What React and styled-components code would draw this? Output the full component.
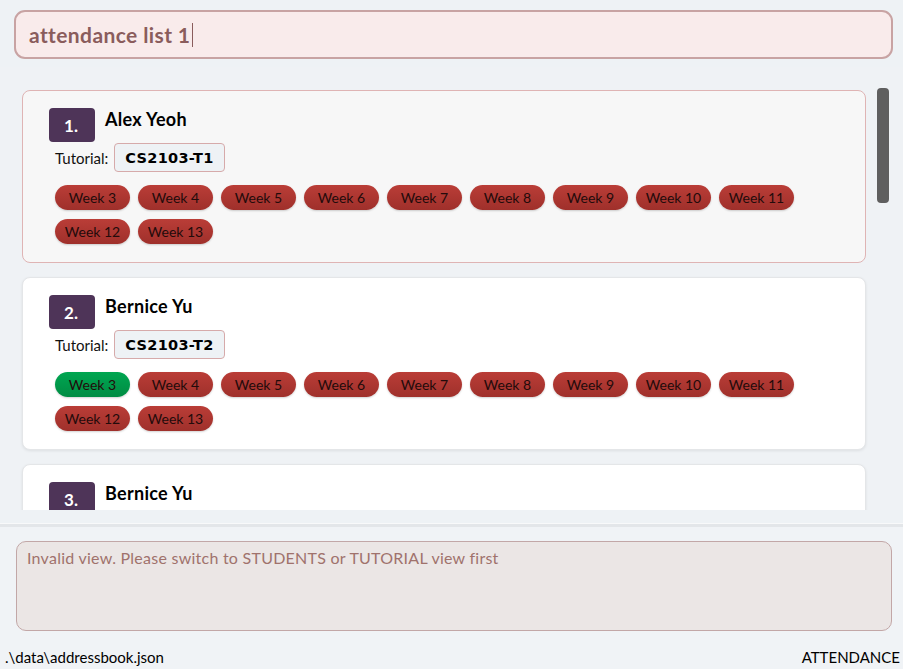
import React from 'react';
import styled, { createGlobalStyle, css } from 'styled-components';

const GlobalStyle = createGlobalStyle`
  html, body {
    margin: 0;
    padding: 0;
    background: #eef2f5;
  }
  * {
    box-sizing: border-box;
  }
`;

const Page = styled.div`
  height: 100vh;
  display: flex;
  flex-direction: column;
  background: #eef2f5;
  font-family: Lato, "Noto Sans", sans-serif;
  color: #000;
  overflow: hidden;
`;

const CommandBar = styled.div`
  padding: 10px 10px 0 14px;
`;

const CommandBox = styled.div`
  height: 49px;
  border: 2px solid #c8a3a3;
  border-radius: 11px;
  background: #f9ebeb;
  display: flex;
  align-items: center;
  padding-left: 13px;
  font-size: 21px;
  font-weight: 700;
  letter-spacing: 0.4px;
  color: #8a5c5c;
`;

const Caret = styled.span`
  display: inline-block;
  width: 0;
  height: 24px;
  border-left: 1.5px solid #8a5c5c;
  margin-left: 2px;
`;

const ListPane = styled.div`
  position: relative;
  margin-top: 8px;
  height: 443px;
  overflow: hidden;
  padding: 23px 37px 0 22px;
  display: flex;
  flex-direction: column;
  gap: 14px;
  background: #eff2f5;
`;

const ScrollThumb = styled.div`
  position: absolute;
  top: 21px;
  right: 14px;
  width: 12px;
  height: 115px;
  border-radius: 4px;
  background: #5f5f5f;
`;

const Card = styled.div`
  flex-shrink: 0;
  border-radius: 8px;
  padding: 17px 20px 18px 32px;
  ${({ $selected }) =>
    $selected
      ? css`
          background: #f7f7f7;
          border: 1px solid #dfb4b4;
        `
      : css`
          background: #ffffff;
          border: 1px solid #e4e6e8;
          box-shadow: 0 1px 3px rgba(0, 0, 0, 0.08);
        `}
`;

const CardHeader = styled.div`
  display: flex;
  align-items: flex-start;
  margin-left: -6px;
`;

const IndexBox = styled.div`
  width: 46px;
  height: 34px;
  border-radius: 4px;
  background: #4e3458;
  color: #fff;
  font-size: 17px;
  font-weight: 700;
  display: flex;
  align-items: flex-end;
  justify-content: center;
  padding-bottom: 6px;
  padding-right: 2px;
`;

const Name = styled.div`
  margin-left: 10px;
  margin-top: 1px;
  font-size: 18px;
  font-weight: 700;
  letter-spacing: 0.3px;
  line-height: 20px;
`;

const TutorialRow = styled.div`
  display: flex;
  align-items: center;
  margin-top: 1px;
`;

const TutorialLabel = styled.span`
  font-size: 15px;
  color: #111;
`;

const TutorialTag = styled.span`
  margin-left: 6px;
  height: 29px;
  padding: 0 10px;
  display: inline-flex;
  align-items: center;
  border: 1px solid #d6aaaa;
  border-radius: 4px;
  background: #eef2f5;
  font-family: "DejaVu Sans", Verdana, sans-serif;
  font-size: 14.5px;
  font-weight: 700;
  letter-spacing: 0.3px;
`;

const Weeks = styled.div`
  display: flex;
  flex-wrap: wrap;
  column-gap: 8px;
  row-gap: 9px;
  margin-top: 13px;
`;

const WeekPill = styled.span`
  width: 75px;
  height: 25px;
  border-radius: 13px;
  display: inline-flex;
  align-items: center;
  justify-content: center;
  font-size: 14px;
  color: #230b0b;
  box-shadow: 0 1px 2px rgba(0, 0, 0, 0.18);
  background: ${({ $present }) =>
    $present
      ? 'linear-gradient(#00a651, #008c43)'
      : 'linear-gradient(#ba3d37, #9f302b)'};
`;

const Divider = styled.div`
  margin-top: 13px;
  height: 4px;
  border-top: 1px solid #f8f9fa;
  background: #e3e6e9;
`;

const ResultArea = styled.div`
  padding: 14px 11px 0 16px;
  background: #f0f3f6;
`;

const ResultBox = styled.div`
  height: 90px;
  border: 1px solid #c2a7a7;
  border-radius: 10px;
  background: #ebe6e5;
  padding: 6px 10px;
  font-size: 16px;
  letter-spacing: 0.25px;
  color: #a0726c;
`;

const StatusBar = styled.div`
  flex: 1;
  display: flex;
  align-items: flex-end;
  justify-content: space-between;
  padding: 0 3px 2px 5px;
  background: #f0f3f6;
  font-size: 15px;
  line-height: 20px;
`;

const weeks = [3, 4, 5, 6, 7, 8, 9, 10, 11, 12, 13];

const students = [
  { name: 'Alex Yeoh', tutorial: 'CS2103-T1', present: [] },
  { name: 'Bernice Yu', tutorial: 'CS2103-T2', present: [3] },
  { name: 'Bernice Yu', tutorial: 'CS2103-T2', present: [] },
];

const StudentCard = ({ index, student, selected }) => (
  <Card $selected={selected}>
    <CardHeader>
      <IndexBox>{index}.</IndexBox>
      <Name>{student.name}</Name>
    </CardHeader>
    <TutorialRow>
      <TutorialLabel>Tutorial:</TutorialLabel>
      <TutorialTag>{student.tutorial}</TutorialTag>
    </TutorialRow>
    <Weeks>
      {weeks.map((w) => (
        <WeekPill key={w} $present={student.present.includes(w)}>
          Week {w}
        </WeekPill>
      ))}
    </Weeks>
  </Card>
);

const App = () => (
  <Page>
    <GlobalStyle />
    <CommandBar>
      <CommandBox>
        attendance list 1<Caret />
      </CommandBox>
    </CommandBar>
    <ListPane>
      {students.map((s, i) => (
        <StudentCard key={i} index={i + 1} student={s} selected={i === 0} />
      ))}
      <ScrollThumb />
    </ListPane>
    <Divider />
    <ResultArea>
      <ResultBox>Invalid view. Please switch to STUDENTS or TUTORIAL view first</ResultBox>
    </ResultArea>
    <StatusBar>
      <span>.\data\addressbook.json</span>
      <span>ATTENDANCE</span>
    </StatusBar>
  </Page>
);

export default App;
